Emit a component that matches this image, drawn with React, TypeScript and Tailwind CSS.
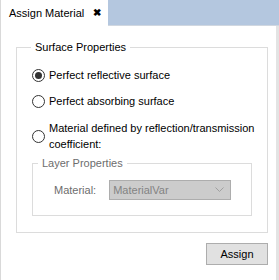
import React from 'react';

function Radio({ checked }: { checked?: boolean }) {
  return (
    <span className="flex h-[13px] w-[13px] shrink-0 items-center justify-center rounded-full border border-[#333333] bg-white">
      {checked && <span className="h-[7px] w-[7px] rounded-full bg-[#333333]" />}
    </span>
  );
}

export default function App() {
  return (
    <div
      className="flex h-[280px] w-[279px] flex-col whitespace-nowrap bg-white text-[11px] leading-[15px] text-black"
      style={{ fontFamily: '"Liberation Sans", Arial, sans-serif' }}
    >
      <div className="flex h-[26px] shrink-0">
        <div className="flex w-[108px] items-center border-l border-[#d9d9d9] bg-white pl-[8px]">
          <span>Assign Material</span>
          <span className="ml-[9px] text-[10px] font-bold leading-none">✖</span>
        </div>
        <div className="flex-1 border-b border-[#d0d7e0] bg-[#b4c7df]" />
      </div>

      <div className="flex flex-1 flex-col border-l border-r-[3px] border-[#e3e3e3] border-l-[#d9d9d9] pl-[15px] pr-[8px] pt-[14px]">
        <fieldset className="min-w-0 border border-[#dcdcdc] px-[15px] pb-[16px] pt-[6px]">
          <legend className="ml-[-1px] px-[4px] leading-[14px]">Surface Properties</legend>

          <div className="flex flex-col gap-[11px] pt-[8px]">
            <label className="flex items-center gap-[4px]">
              <Radio checked />
              <span>Perfect reflective surface</span>
            </label>
            <label className="flex items-center gap-[4px]">
              <Radio />
              <span>Perfect absorbing surface</span>
            </label>
            <label className="flex items-center gap-[4px]">
              <Radio />
              <span className="leading-[16px]">
                Material defined by reflection/transmission
                <br />
                coefficient:
              </span>
            </label>
          </div>

          <fieldset className="mt-[4px] min-w-0 border border-[#dcdcdc] pb-[15px] pl-[21px] pr-[20px] pt-[10px] text-[#6d6d6d]">
            <legend className="ml-[-16px] px-[4px] leading-[14px]">Layer Properties</legend>
            <div className="flex items-center gap-[13px]">
              <span>Material:</span>
              <div className="flex h-[20px] w-[125px] items-center justify-between border border-[#adadad] bg-[#cccccc] pl-[3px] pr-[6px] text-[#838383]">
                <span>MaterialVar</span>
                <svg width="9" height="6" viewBox="0 0 9 6" fill="none" stroke="#a0a0a0" strokeWidth="1">
                  <path d="M0.5 0.5 L4.5 4.5 L8.5 0.5" />
                </svg>
              </div>
            </div>
          </fieldset>
        </fieldset>

        <div className="flex justify-end pt-[10px]">
          <button className="h-[22px] w-[62px] border border-[#adadad] bg-[#e1e1e1] text-[11px]">Assign</button>
        </div>
      </div>
    </div>
  );
}
